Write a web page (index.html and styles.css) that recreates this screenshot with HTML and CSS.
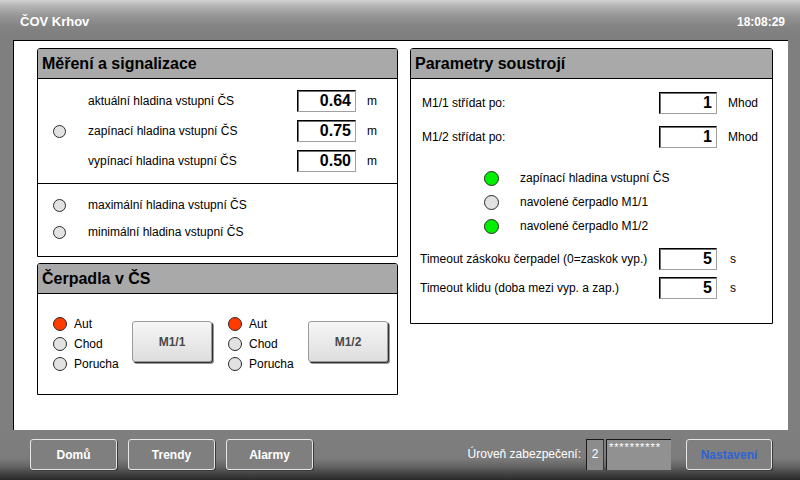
FILE: index.html
```html
<!DOCTYPE html>
<html lang="cs">
<head>
<meta charset="utf-8">
<title>ČOV Krhov</title>
<link rel="stylesheet" href="styles.css">
</head>
<body>
<div class="screen">
  <header class="topbar">
    <span class="title">ČOV Krhov</span>
    <span class="clock">18:08:29</span>
  </header>

  <main class="content">
    <div class="col-left">
      <section class="panel panel-mereni">
        <h2 class="panel-head">Měření a signalizace</h2>
        <div class="sec sec-levels">
          <div class="mrow"><span class="slot"></span><span class="mlabel">aktuální hladina vstupní ČS</span><span class="field">0.64</span><span class="unit">m</span></div>
          <div class="mrow"><span class="slot"><span class="lamp lamp-sm"></span></span><span class="mlabel">zapínací hladina vstupní ČS</span><span class="field">0.75</span><span class="unit">m</span></div>
          <div class="mrow"><span class="slot"></span><span class="mlabel">vypínací hladina vstupní ČS</span><span class="field">0.50</span><span class="unit">m</span></div>
        </div>
        <div class="sec sec-alarms">
          <div class="arow"><span class="slot"><span class="lamp lamp-sm"></span></span><span class="mlabel">maximální hladina vstupní ČS</span></div>
          <div class="arow"><span class="slot"><span class="lamp lamp-sm"></span></span><span class="mlabel">minimální hladina vstupní ČS</span></div>
        </div>
      </section>

      <section class="panel panel-cerpadla">
        <h2 class="panel-head">Čerpadla v ČS</h2>
        <div class="pumps">
          <div class="pump">
            <div class="states">
              <div class="srow"><span class="lamp lamp-red"></span><span>Aut</span></div>
              <div class="srow"><span class="lamp"></span><span>Chod</span></div>
              <div class="srow"><span class="lamp"></span><span>Porucha</span></div>
            </div>
            <div class="pump-btn">M1/1</div>
          </div>
          <div class="pump">
            <div class="states">
              <div class="srow"><span class="lamp lamp-red"></span><span>Aut</span></div>
              <div class="srow"><span class="lamp"></span><span>Chod</span></div>
              <div class="srow"><span class="lamp"></span><span>Porucha</span></div>
            </div>
            <div class="pump-btn">M1/2</div>
          </div>
        </div>
      </section>
    </div>

    <section class="panel panel-param">
      <h2 class="panel-head">Parametry soustrojí</h2>
      <div class="param-body">
        <div class="prow"><span class="plabel">M1/1 střídat po:</span><span class="field field-p">1</span><span class="unit-p">Mhod</span></div>
        <div class="prow prow-2"><span class="plabel">M1/2 střídat po:</span><span class="field field-p">1</span><span class="unit-p">Mhod</span></div>
        <div class="indicators">
          <div class="irow"><span class="lamp lamp-lg lamp-green"></span><span>zapínací hladina vstupní ČS</span></div>
          <div class="irow"><span class="lamp lamp-lg"></span><span>navolené čerpadlo M1/1</span></div>
          <div class="irow"><span class="lamp lamp-lg lamp-green"></span><span>navolené čerpadlo M1/2</span></div>
        </div>
        <div class="trow trow-1"><span class="tlabel">Timeout záskoku čerpadel (0=zaskok vyp.)</span><span class="field field-p">5</span><span class="unit-t">s</span></div>
        <div class="trow trow-2"><span class="tlabel">Timeout klidu (doba mezi vyp. a zap.)</span><span class="field field-p">5</span><span class="unit-t">s</span></div>
      </div>
    </section>
  </main>

  <footer class="bottombar">
    <div class="nav">
      <div class="fbtn">Domů</div>
      <div class="fbtn">Trendy</div>
      <div class="fbtn">Alarmy</div>
    </div>
    <div class="security">
      <span class="sec-label">Úroveň zabezpečení:</span>
      <span class="sec-level">2</span>
      <span class="sec-pass">**********</span>
      <div class="fbtn fbtn-blue">Nastavení</div>
    </div>
  </footer>
</div>
</body>
</html>
```

FILE: styles.css
```css
html, body {
  margin: 0;
  padding: 0;
}

body {
  width: 800px;
  height: 480px;
  overflow: hidden;
  font-family: "Liberation Sans", Arial, sans-serif;
  font-size: 12px;
  color: #000;
}

.screen {
  width: 800px;
  height: 480px;
  display: flex;
  flex-direction: column;
  background: #7f7f7f;
}

/* ---------- top bar ---------- */
.topbar {
  height: 40px;
  box-sizing: border-box;
  padding: 3px 15px 0 20px;
  display: flex;
  justify-content: space-between;
  align-items: center;
  color: #fff;
  font-weight: bold;
  background: linear-gradient(#d2d2d2 0px, #b4b4b4 6px, #959595 16px, #848484 26px, #7f7f7f 36px);
}

.title {
  font-size: 13px;
}

.clock {
  font-size: 12px;
}

/* ---------- content ---------- */
.content {
  margin-left: 13px;
  width: 775px;
  height: 390px;
  box-sizing: border-box;
  background: #fff;
  border-top: 1px solid #000;
  border-left: 1px solid #000;
  padding: 7px 0 0 23px;
  display: flex;
  align-items: flex-start;
  gap: 12px;
}

.col-left {
  width: 361px;
  display: flex;
  flex-direction: column;
  gap: 6px;
}

.panel {
  box-sizing: border-box;
  border: 1px solid #000;
  border-radius: 3px 3px 0 0;
  background: #fff;
}

.panel-head {
  margin: 0;
  height: 29px;
  line-height: 29px;
  padding-left: 4px;
  background: #a9a9a9;
  border-bottom: 1px solid #000;
  border-radius: 2px 2px 0 0;
  font-size: 16px;
  font-weight: bold;
}

.panel-mereni {
  height: 209px;
}

.panel-cerpadla {
  height: 132px;
}

.panel-param {
  width: 363px;
  height: 276px;
}

/* lamps */
.lamp {
  display: inline-block;
  box-sizing: border-box;
  width: 14px;
  height: 14px;
  border-radius: 50%;
  border: 1px solid #2a2a2a;
  background: #e2e2e2;
  flex: none;
}

.lamp-sm {
  width: 13px;
  height: 13px;
}

.lamp-lg {
  width: 15px;
  height: 15px;
}

.lamp-red {
  background: #ff3c00;
}

.lamp-green {
  background: #00f000;
}

/* input-like fields */
.field {
  box-sizing: border-box;
  width: 59px;
  height: 22px;
  border: 1px solid;
  border-color: #000 #a0a0a0 #a0a0a0 #000;
  box-shadow: inset 1px 1px 0 #707070;
  text-align: right;
  padding-right: 4px;
  font-size: 16px;
  font-weight: bold;
  line-height: 20px;
  background: #fff;
  flex: none;
}

/* measurement panel */
.sec-levels {
  padding: 11px 0;
  border-bottom: 1px solid #000;
  display: flex;
  flex-direction: column;
  gap: 8px;
}

.mrow {
  height: 22px;
  display: flex;
  align-items: center;
  padding-left: 15px;
}

.slot {
  width: 35px;
  flex: none;
  display: flex;
  align-items: center;
}

.mlabel {
  flex: 1;
}

.unit {
  width: 41px;
  padding-left: 11px;
  box-sizing: border-box;
  flex: none;
}

.sec-alarms {
  padding-top: 12px;
  display: flex;
  flex-direction: column;
  gap: 9px;
}

.arow {
  height: 18px;
  display: flex;
  align-items: center;
  padding-left: 15px;
}

/* pumps panel */
.pumps {
  display: flex;
  gap: 16px;
  padding: 20px 0 0 15px;
}

.pump {
  display: flex;
  align-items: flex-start;
}

.states {
  width: 79px;
  display: flex;
  flex-direction: column;
}

.pump + .pump .states {
  width: 80px;
}

.srow {
  height: 20px;
  display: flex;
  align-items: center;
  gap: 7px;
}

.pump-btn {
  margin-top: 7px;
  width: 80px;
  height: 41px;
  box-sizing: border-box;
  border: 1px solid #9a9a9a;
  border-radius: 3px;
  background: linear-gradient(#f6f6f6, #dedede);
  box-shadow: 1px 1px 0 #303030, 2px 2px 0 #9a9a9a;
  display: flex;
  align-items: center;
  justify-content: center;
  font-weight: bold;
  color: #4a4a4a;
}

/* parameters panel */
.param-body {
  display: flex;
  flex-direction: column;
  padding-top: 13px;
}

.prow {
  height: 22px;
  display: flex;
  align-items: center;
  padding-left: 11px;
}

.prow-2 {
  margin-top: 12px;
}

.plabel {
  width: 237px;
  flex: none;
}

.field-p {
  width: 58px;
}

.unit-p {
  padding-left: 11px;
}

.indicators {
  margin-top: 21px;
  display: flex;
  flex-direction: column;
  gap: 6px;
}

.irow {
  height: 18px;
  display: flex;
  align-items: center;
  gap: 21px;
  padding-left: 73px;
}

.trow {
  height: 22px;
  display: flex;
  align-items: center;
  padding-left: 9px;
}

.trow-1 {
  margin-top: 13px;
}

.trow-2 {
  margin-top: 7px;
}

.tlabel {
  width: 239px;
  flex: none;
}

.unit-t {
  padding-left: 13px;
}

/* ---------- bottom bar ---------- */
.bottombar {
  height: 50px;
  box-sizing: border-box;
  padding: 9px 28px 0 30px;
  display: flex;
  justify-content: space-between;
  align-items: flex-start;
  background: linear-gradient(#7f7f7f 0px, #7c7c7c 28px, #666 36px, #454545 43px, #2a2a2a 50px);
}

.nav {
  display: flex;
  gap: 11px;
}

.fbtn {
  width: 87px;
  height: 31px;
  box-sizing: border-box;
  border: 1px solid #e6e6e6;
  border-radius: 3px;
  box-shadow: 1px 1px 0 #3a3a3a;
  background: #7f7f7f;
  color: #fff;
  font-weight: bold;
  display: flex;
  align-items: center;
  justify-content: center;
}

.fbtn-blue {
  width: 86px;
  margin-left: 15px;
  color: #2f62d6;
}

.security {
  display: flex;
  align-items: flex-start;
}

.sec-label {
  color: #fff;
  margin-top: 8px;
  margin-right: 5px;
}

.sec-level {
  width: 18px;
  height: 31px;
  box-sizing: border-box;
  border-top: 1px solid #1a1a1a;
  border-left: 1px solid #1a1a1a;
  border-right: 1px solid #3a3a3a;
  background: #8c8c8c;
  color: #fff;
  text-align: center;
  padding-top: 7px;
}

.sec-pass {
  margin-left: 2px;
  width: 65px;
  height: 31px;
  box-sizing: border-box;
  border-top: 1px solid #1a1a1a;
  border-left: 1px solid #1a1a1a;
  background: #919191;
  color: #fff;
  padding: 1px 0 0 2px;
  font-size: 11px;
  letter-spacing: 0.9px;
  overflow: hidden;
  white-space: nowrap;
}
```
